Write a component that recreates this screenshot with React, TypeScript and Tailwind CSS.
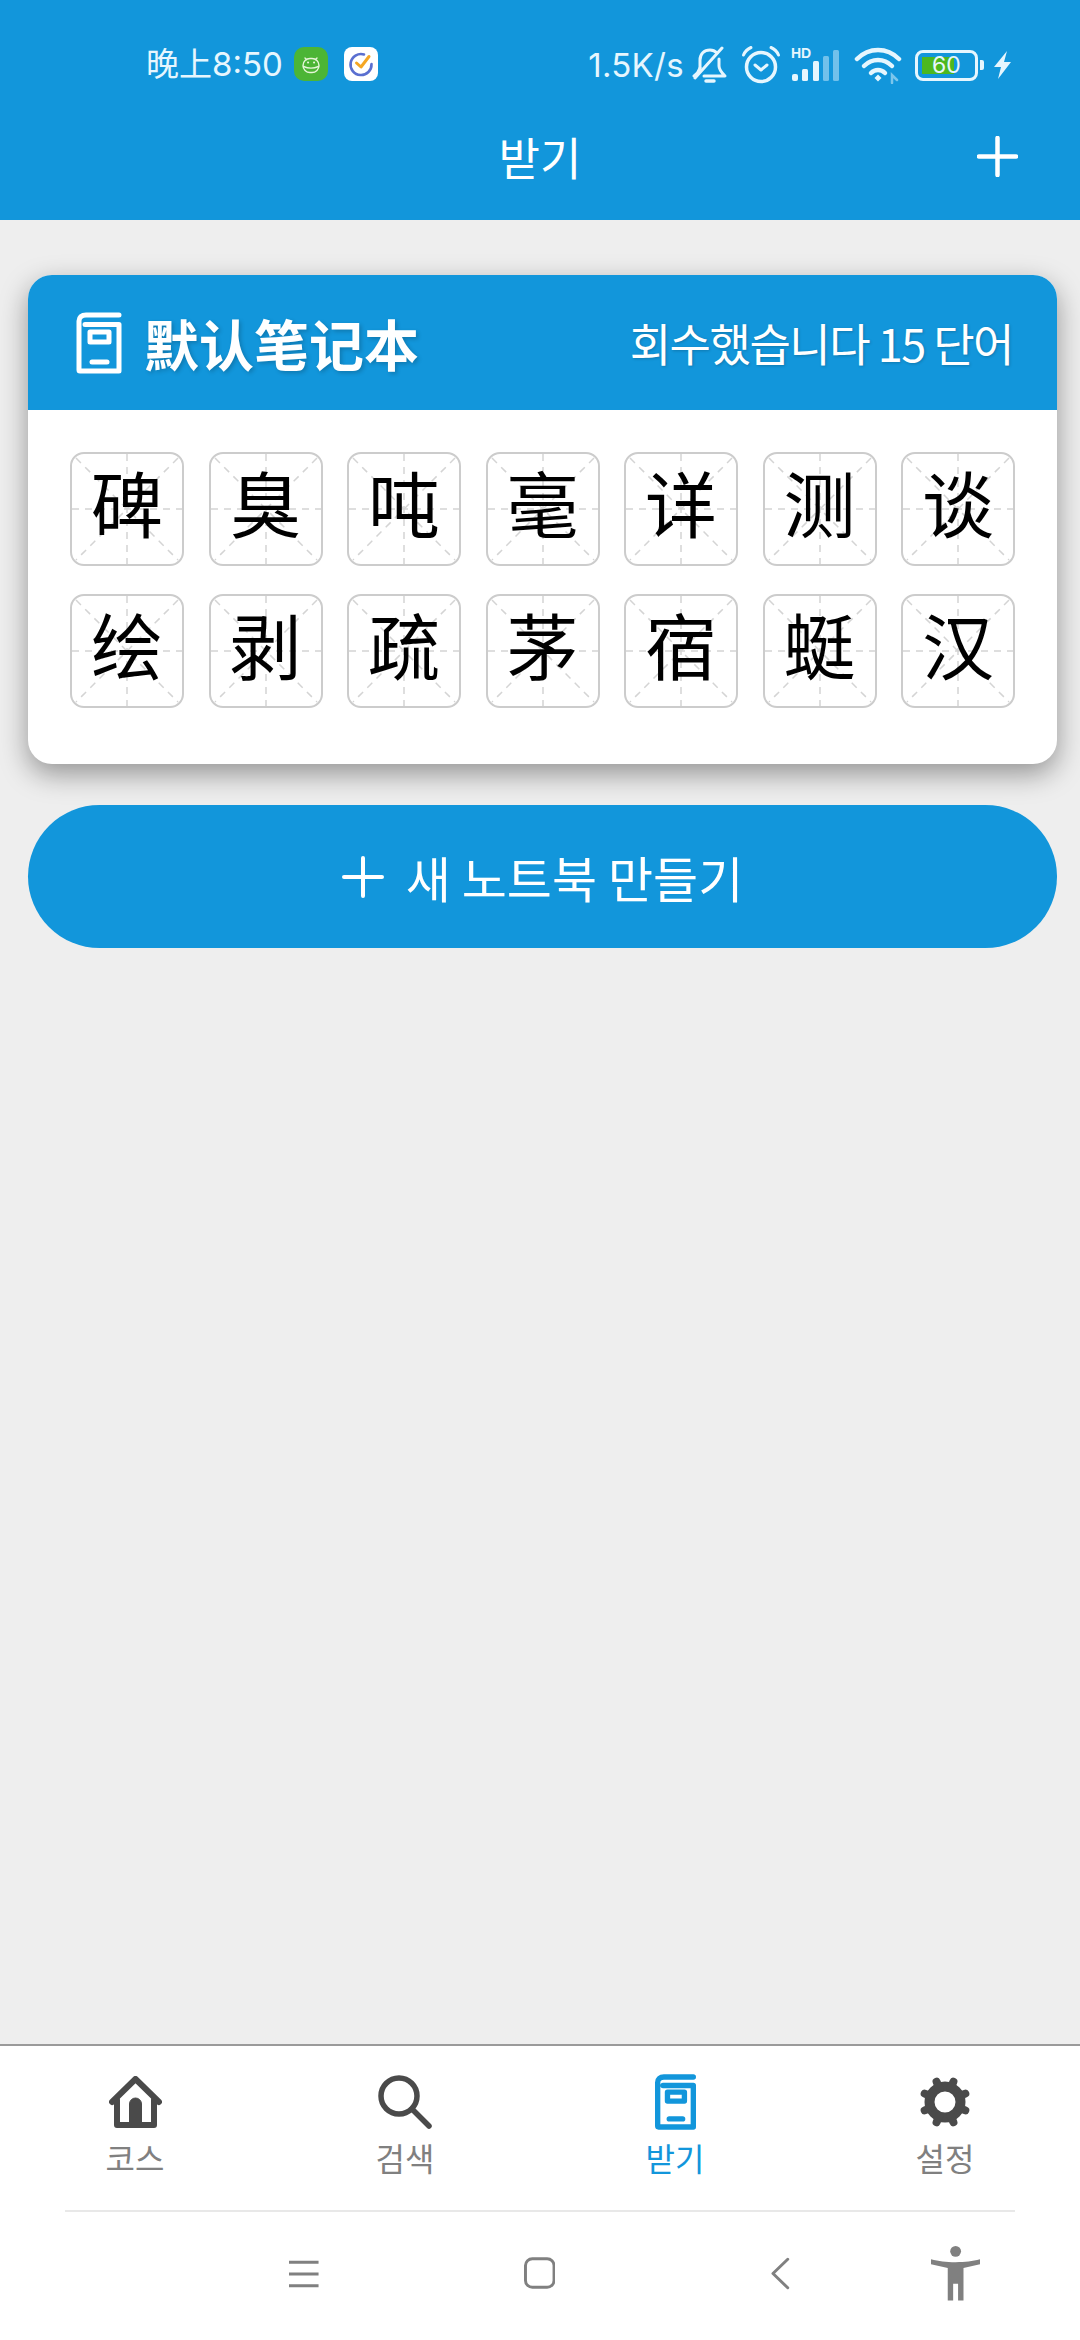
import React from 'react';

const KR = "font-['Noto_Sans_CJK_KR','Noto_Sans_CJK_SC',sans-serif]";
const SC = "font-['Noto_Sans_CJK_SC',sans-serif]";

const ROWS = [
    ['碑', '臭', '吨', '毫', '详', '测', '谈'],
    ['绘', '剥', '疏', '茅', '宿', '蜓', '汉'],
];

const BookIcon: React.FC<{ className?: string; weight?: number }> = ({ className, weight = 5 }) => (
    <svg viewBox="0 0 46 62" fill="none" stroke="currentColor" strokeWidth={weight} strokeLinecap="round" strokeLinejoin="round" className={className}>
        <path d="M43 3H10C5.500 3 3 5.500 3 9V58C3 58.600 3.400 59 4 59H43V12.500H9" />
        <rect x="14" y="20" width="19" height="10" />
        <path d="M16 50H31" />
    </svg>
);

const HomeIcon: React.FC = () => (
    <svg viewBox="0 0 53 52" className="w-[53px] h-[52px] text-[#4a4a4a]" fill="none" stroke="currentColor" strokeLinecap="round" strokeLinejoin="round">
        <path d="M3 26L26.500 3L50 26" strokeWidth="6" />
        <path d="M8 24V49H45V24" strokeWidth="6" />
        <path d="M20.500 49V28A6 6 0 0 1 32.500 28V49Z" fill="currentColor" strokeWidth="1" />
    </svg>
);

const SearchIcon: React.FC = () => (
    <svg viewBox="0 0 54 54" className="w-[54px] h-[54px] text-[#4a4a4a]" fill="none" stroke="currentColor" strokeWidth="5.500" strokeLinecap="round">
        <circle cx="21" cy="21" r="18" />
        <path d="M34 34L51 51" />
    </svg>
);

const GearIcon: React.FC = () => (
    <svg viewBox="0 0 54 54" className="w-[54px] h-[54px] text-[#4a4a4a]" fill="none" stroke="currentColor">
        <circle cx="27" cy="27" r="15.500" strokeWidth="10" />
        {[22.5, 67.5, 112.5, 157.5, 202.5, 247.5, 292.5, 337.5].map((a) => (
            <path key={a} d="M27 12V5" strokeWidth="8" strokeLinecap="round" transform={`rotate(${a} 27 27)`} />
        ))}
    </svg>
);

const StatusIcons: React.FC = () => (
    <div className="flex items-center">
        <span className="text-[33px] leading-none text-[#e6f6fe] font-['Inter',sans-serif] tracking-[0.3px]">1.5K/s</span>
        {/* bell off */}
        <svg viewBox="0 0 36 38" className="ml-[8px] w-[36px] h-[38px]" fill="none" stroke="#e6f6fe" strokeWidth="3" strokeLinecap="round" strokeLinejoin="round">
            <path d="M8 22V14C8 8 12 4 18 4C21 4 23 5 25 7" />
            <path d="M27 13V20C27 24 30 27 33 30H12" />
            <path d="M8 22C7 25 5 28 2 30" />
            <path d="M30 2L3 32" />
            <path d="M14 35H22" strokeWidth="3.500" />
        </svg>
        {/* alarm */}
        <svg viewBox="0 0 40 40" className="ml-[13px] w-[40px] h-[40px]" fill="none" stroke="#e6f6fe" strokeLinecap="round" strokeLinejoin="round">
            <circle cx="20" cy="22" r="14.500" strokeWidth="3.500" />
            <path d="M14 20L20 25L26 20" strokeWidth="3" />
            <path d="M2.500 10C4 6.500 6.500 4 10 2.500" strokeWidth="3" />
            <path d="M37.500 10C36 6.500 33.500 4 30 2.500" strokeWidth="3" />
        </svg>
        {/* HD signal */}
        <div className="ml-[10px] relative w-[50px] h-[36px]">
            <span className="absolute left-0 top-[-1px] text-[14px] leading-[14px] font-bold text-[#e6f6fe] font-['Liberation_Sans',sans-serif]">HD</span>
            <svg viewBox="0 0 50 36" className="w-[50px] h-[36px]" fill="#e6f6fe">
                <rect x="1" y="27" width="6" height="7" rx="2" />
                <rect x="11" y="22" width="6" height="12" rx="1.500" />
                <rect x="22" y="14" width="6" height="20" rx="1.500" />
                <rect x="32" y="9" width="6" height="25" rx="1.500" opacity="0.45" />
                <rect x="42" y="3" width="6" height="31" rx="1.500" opacity="0.45" />
            </svg>
        </div>
        {/* wifi */}
        <svg viewBox="0 0 48 38" className="ml-[13px] w-[48px] h-[38px]" fill="none" stroke="#e6f6fe" strokeWidth="4.500" strokeLinecap="round">
            <path d="M3 13C15 1 33 1 45 13" />
            <path d="M10 20C18 12 30 12 38 20" />
            <path d="M17 27C21 23 27 23 31 27" />
            <path d="M20.500 32L24 28.500L27.500 32L24 35.500Z" fill="#e6f6fe" stroke="none" />
            <path d="M38 37V29L43 34" stroke="#e6f6fe" strokeWidth="2.500" opacity="0.5" />
        </svg>
        {/* battery */}
        <div className="ml-[13px] flex items-center">
            <div className="relative w-[63px] h-[31px] rounded-[8px] border-[3.5px] border-[#e6f6fe] p-[4px]">
                <div className="w-[32px] h-full bg-[#4cb81f]" />
                <span className="absolute inset-0 flex items-center justify-center text-[23px] leading-none text-[#e6f6fe] font-['Inter',sans-serif]">60</span>
            </div>
            <div className="ml-[2px] w-[4px] h-[10px] rounded-r-[2px] bg-[#e6f6fe]" />
        </div>
        <svg viewBox="0 0 19 30" className="ml-[9px] w-[19px] h-[30px]" fill="#e6f6fe">
            <path d="M14 1L1 17H8L5 29L18 12H11Z" />
        </svg>
    </div>
);

const Tile: React.FC<{ ch: string }> = ({ ch }) => (
    <div className="relative w-[114px] h-[114px] rounded-[14px] border-2 border-[#cccccc] flex items-center justify-center">
        <svg viewBox="0 0 110 110" className="absolute inset-0 w-full h-full" fill="none" stroke="#d4d4d4" strokeWidth="1.500" strokeDasharray="7 6">
            <path d="M55 0V110" />
            <path d="M0 55H110" />
            <path d="M4 4L106 106" />
            <path d="M106 4L4 106" />
        </svg>
        <span className={`relative mb-[16px] text-[72px] leading-[90px] text-black ${SC}`}>{ch}</span>
    </div>
);

const App: React.FC = () => {
    return (
        <div className="w-[1080px] h-[2340px] flex flex-col bg-[#eeeeee] overflow-hidden">
            <header className="h-[220px] bg-[#1296db] shrink-0">
                <div className="h-[126px] pt-[45px] pl-[146px] pr-[68px] flex items-start justify-between">
                    <div className="flex items-center h-[38px]">
                        <span className="text-[33px] leading-none text-[#e6f6fe] font-['Inter','Noto_Sans_CJK_SC',sans-serif] w-[148px] whitespace-nowrap">晚上8:50</span>
                        <div className="w-[34px] h-[34px] rounded-[10px] bg-[#4cb535] flex items-center justify-center">
                            <svg viewBox="0 0 24 24" className="w-[24px] h-[24px]" fill="none" stroke="#e6f6d8" strokeWidth="1.400" strokeLinecap="round">
                                <path d="M6 6L7.500 7.500M18 6L16.500 7.500" />
                                <rect x="4" y="6.500" width="16" height="14" rx="7" />
                                <path d="M4.500 14.500C9 16.500 15 16.500 19.500 14.500" />
                                <path d="M9 10.500H9.100M15 10.500H15.100" strokeWidth="2" />
                            </svg>
                        </div>
                        <div className="ml-[16px] w-[34px] h-[34px] rounded-[8px] bg-white flex items-center justify-center">
                            <svg viewBox="0 0 26 26" className="w-[26px] h-[26px]" fill="none" strokeLinecap="round" strokeLinejoin="round">
                                <path d="M16 3.500A10.500 10.500 0 1 0 23.500 13" stroke="#5a6fd0" strokeWidth="2.600" />
                                <path d="M8.500 12L13 16L21 5.500" stroke="#f5a623" strokeWidth="3" />
                            </svg>
                        </div>
                    </div>
                    <StatusIcons />
                </div>
                <div className="h-[60px] grid grid-cols-[1fr_auto_1fr] items-center">
                    <div />
                    <h1 className={`text-[45px] leading-none text-white ${KR}`}>받기</h1>
                    <div className="flex justify-end pr-[62px]">
                        <svg viewBox="0 0 41 41" className="w-[41px] h-[41px]" fill="none" stroke="white" strokeWidth="4.500" strokeLinecap="round">
                            <path d="M20.500 2V39M2 20.500H39" />
                        </svg>
                    </div>
                </div>
            </header>

            <main className="flex-1 px-[28px] pt-[55px]">
                <section className="w-[1029px] rounded-[24px] bg-white overflow-hidden shadow-[0_10px_28px_rgba(0,0,0,0.38)]">
                    <div className="h-[135px] bg-[#1296db] pl-[48px] pr-[44px] flex items-center justify-between">
                        <div className="flex items-center">
                            <BookIcon className="w-[46px] h-[62px] text-white" />
                            <span className={`ml-[22px] text-[55px] leading-none font-bold text-white [text-shadow:2px_2px_4px_rgba(0,0,0,0.2)] ${SC}`}>默认笔记本</span>
                        </div>
                        <span className={`text-[45px] leading-none text-white tracking-[-1.5px] [text-shadow:1px_1px_3px_rgba(0,0,0,0.2)] ${KR}`}>회수했습니다 15 단어</span>
                    </div>
                    <div className="px-[42px] pt-[42px] pb-[56px] flex flex-col gap-[28px]">
                        {ROWS.map((row) => (
                            <div key={row[0]} className="flex justify-between">
                                {row.map((ch) => (
                                    <Tile key={ch} ch={ch} />
                                ))}
                            </div>
                        ))}
                    </div>
                </section>

                <button className="mt-[41px] w-[1029px] h-[143px] rounded-[72px] bg-[#1296db] flex items-center justify-center">
                    <svg viewBox="0 0 42 42" className="w-[42px] h-[42px]" fill="none" stroke="white" strokeWidth="4" strokeLinecap="round">
                        <path d="M21 2V40M2 21H40" />
                    </svg>
                    <span className={`ml-[22px] text-[49px] leading-none text-white ${KR}`}>새 노트북 만들기</span>
                </button>
            </main>

            <footer className="h-[296px] shrink-0 bg-white border-t-2 border-[#9a9a9a]">
                <nav className="h-[164px] grid grid-cols-4 pt-[28px]">
                    <div className="flex flex-col items-center">
                        <div className="h-[56px] flex items-center"><HomeIcon /></div>
                        <span className={`mt-[9px] text-[32px] leading-[36px] text-[#808080] ${KR}`}>코스</span>
                    </div>
                    <div className="flex flex-col items-center">
                        <div className="h-[56px] flex items-center"><SearchIcon /></div>
                        <span className={`mt-[9px] text-[32px] leading-[36px] text-[#808080] ${KR}`}>검색</span>
                    </div>
                    <div className="flex flex-col items-center">
                        <div className="h-[56px] flex items-center"><BookIcon className="w-[41px] h-[56px] text-[#1296db]" weight={6} /></div>
                        <span className={`mt-[9px] text-[32px] leading-[36px] text-[#1296db] ${KR}`}>받기</span>
                    </div>
                    <div className="flex flex-col items-center">
                        <div className="h-[56px] flex items-center"><GearIcon /></div>
                        <span className={`mt-[9px] text-[32px] leading-[36px] text-[#808080] ${KR}`}>설정</span>
                    </div>
                </nav>
                <div className="mx-[65px] h-[2px] bg-[#e8e8e8]" />
                <div className="h-[128px] pt-[35px] pl-[289px] pr-[100px] flex items-start">
                    <svg viewBox="0 0 30 28" className="mt-[13px] w-[30px] h-[28px]" fill="none" stroke="#808080" strokeWidth="3">
                        <path d="M0 2H30M0 14H30M0 26H30" />
                    </svg>
                    <svg viewBox="0 0 32 32" className="mt-[10px] ml-[205px] w-[32px] h-[32px]" fill="none" stroke="#808080" strokeWidth="3">
                        <rect x="1.500" y="1.500" width="29" height="29" rx="7" />
                    </svg>
                    <svg viewBox="0 0 19 33" className="mt-[10px] ml-[216px] w-[19px] h-[33px]" fill="none" stroke="#808080" strokeWidth="3" strokeLinecap="round" strokeLinejoin="round">
                        <path d="M17 2L2 16.500L17 31" />
                    </svg>
                    <svg viewBox="0 0 50 57" className="ml-[141px] -mt-[2px] w-[50px] h-[57px]" fill="#808080">
                        <circle cx="25" cy="6" r="5.500" />
                        <path d="M0 14C8 16 15 17 25 17C35 17 42 16 50 14L50 19L33 23V56H27.500V39H22.500V56H17V23L0 19Z" />
                    </svg>
                </div>
            </footer>
        </div>
    );
};

export default App;
